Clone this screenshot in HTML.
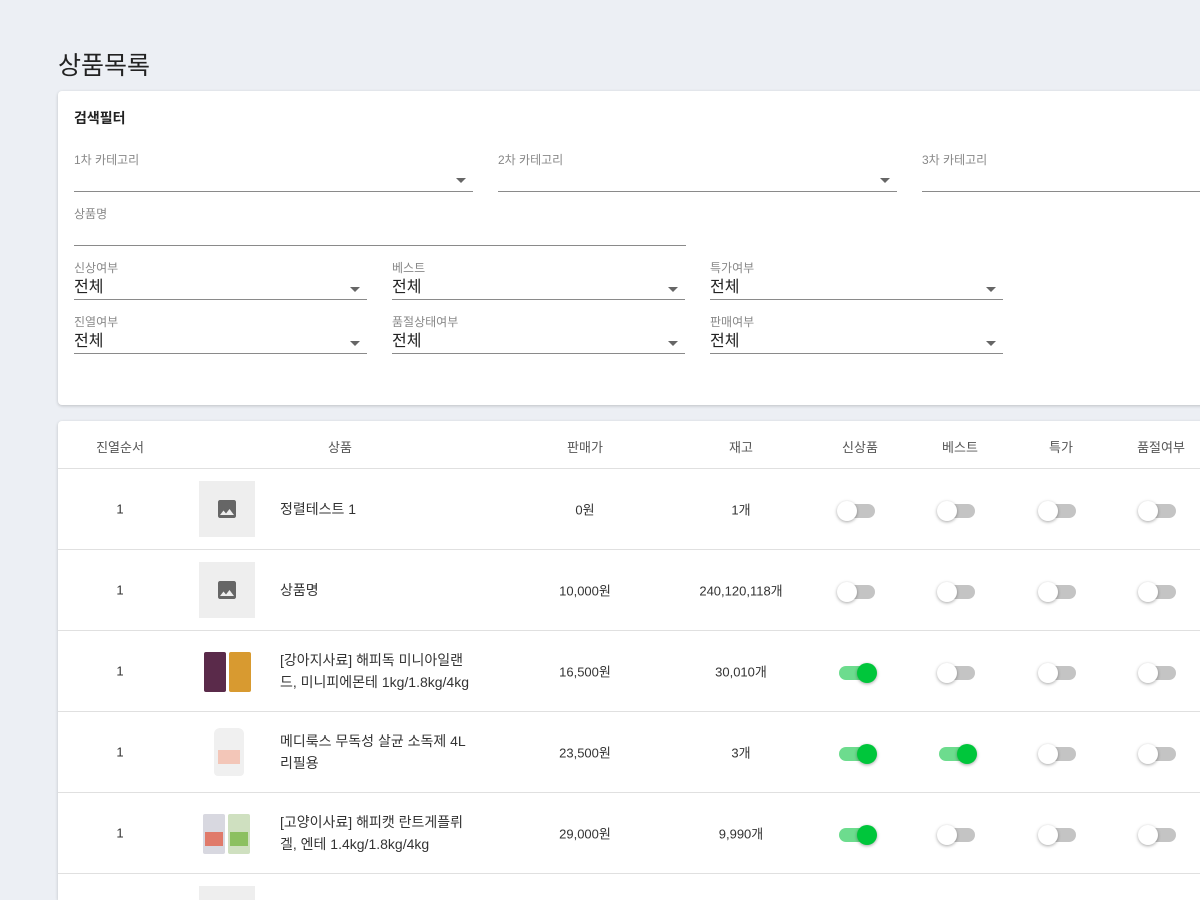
<!DOCTYPE html>
<html><head><meta charset="utf-8"><style>
*{margin:0;padding:0;box-sizing:border-box}
html{width:1200px;height:900px;overflow:hidden}
body{width:1200px;height:900px;overflow:hidden;background:#eceff4;font-family:"Liberation Sans","Noto Sans CJK KR",sans-serif;color:#333;position:relative}
.a{position:absolute}
.card{position:absolute;left:58px;width:1160px;background:#fff;border-radius:4px;box-shadow:0 1px 3px rgba(0,0,0,.2)}
.lbl{position:absolute;font-size:12px;color:#888}
.val{position:absolute;font-size:16px;color:#222}
.ul{position:absolute;height:1px;background:#8a8a8a}
.arr{position:absolute;width:0;height:0;border-left:5px solid transparent;border-right:5px solid transparent;border-top:5px solid #666}
.th{position:absolute;top:437px;font-size:13px;color:#555;transform:translateX(-50%);white-space:nowrap}
.hr{position:absolute;left:58px;width:1142px;height:1px;background:#e0e0e0}
.c{position:absolute;font-size:13px;color:#333;transform:translate(-50%,-50%);white-space:nowrap}
.nm{position:absolute;left:280px;font-size:14px;color:#333;line-height:22px;transform:translateY(-50%)}
.ph{position:absolute;left:199px;width:56px;height:56px;background:#eee}
.ph svg{position:absolute;left:16px;top:16px}
.sw{position:absolute;width:36px;height:14px;border-radius:7px;background:#c4c4c4}
.sw i{position:absolute;top:-3px;left:-2px;width:20px;height:20px;border-radius:50%;background:#fff;box-shadow:0 1px 3px rgba(0,0,0,.35)}
.sw.on{background:#6ddc8e}
.sw.on i{left:18px;background:#00c63b}
</style></head><body>
<div class="a" style="left:58px;top:46px;font-size:25px;color:#222">상품목록</div>
<div class="card" style="top:91px;height:314px"></div>
<div class="a" style="left:74px;top:108px;font-size:14px;font-weight:bold;color:#222">검색필터</div>

<div class="lbl" style="left:74px;top:151px">1차 카테고리</div><div class="ul" style="left:74px;top:191px;width:399px"></div><div class="arr" style="left:456px;top:178px"></div>
<div class="lbl" style="left:498px;top:151px">2차 카테고리</div><div class="ul" style="left:498px;top:191px;width:399px"></div><div class="arr" style="left:880px;top:178px"></div>
<div class="lbl" style="left:922px;top:151px">3차 카테고리</div><div class="ul" style="left:922px;top:191px;width:300px"></div>
<div class="lbl" style="left:74px;top:205px">상품명</div><div class="ul" style="left:74px;top:245px;width:612px"></div>

<div class="lbl" style="left:74px;top:259px">신상여부</div><div class="val" style="left:74px;top:273px">전체</div><div class="ul" style="left:74px;top:299px;width:293px"></div><div class="arr" style="left:350px;top:287px"></div>
<div class="lbl" style="left:392px;top:259px">베스트</div><div class="val" style="left:392px;top:273px">전체</div><div class="ul" style="left:392px;top:299px;width:293px"></div><div class="arr" style="left:668px;top:287px"></div>
<div class="lbl" style="left:710px;top:259px">특가여부</div><div class="val" style="left:710px;top:273px">전체</div><div class="ul" style="left:710px;top:299px;width:293px"></div><div class="arr" style="left:986px;top:287px"></div>
<div class="lbl" style="left:74px;top:313px">진열여부</div><div class="val" style="left:74px;top:327px">전체</div><div class="ul" style="left:74px;top:353px;width:293px"></div><div class="arr" style="left:350px;top:341px"></div>
<div class="lbl" style="left:392px;top:313px">품절상태여부</div><div class="val" style="left:392px;top:327px">전체</div><div class="ul" style="left:392px;top:353px;width:293px"></div><div class="arr" style="left:668px;top:341px"></div>
<div class="lbl" style="left:710px;top:313px">판매여부</div><div class="val" style="left:710px;top:327px">전체</div><div class="ul" style="left:710px;top:353px;width:293px"></div><div class="arr" style="left:986px;top:341px"></div>

<div class="card" style="top:421px;height:479px;border-radius:4px 4px 0 0"></div>
<div class="th" style="left:120px">진열순서</div>
<div class="th" style="left:340px">상품</div>
<div class="th" style="left:585px">판매가</div>
<div class="th" style="left:741px">재고</div>
<div class="th" style="left:860px">신상품</div>
<div class="th" style="left:960px">베스트</div>
<div class="th" style="left:1061px">특가</div>
<div class="th" style="left:1161px">품절여부</div>
<div class="hr" style="top:468px"></div>
<div class="hr" style="top:549px"></div>
<div class="hr" style="top:630px"></div>
<div class="hr" style="top:711px"></div>
<div class="hr" style="top:792px"></div>
<div class="hr" style="top:873px"></div>

<div class="c" style="left:120px;top:509px">1</div>
<div class="ph" style="top:481px"><svg width="24" height="24" viewBox="0 0 24 24"><path fill="#666" d="M21 19V5c0-1.1-.9-2-2-2H5c-1.1 0-2 .9-2 2v14c0 1.1.9 2 2 2h14c1.1 0 2-.9 2-2zM8.5 13.5l2.5 3 3.5-4.5 4.5 6H5l3.5-4.5z"/></svg></div>
<div class="nm" style="top:509px">정렬테스트 1</div>
<div class="c" style="left:585px;top:509px">0원</div>
<div class="c" style="left:741px;top:509px">1개</div>

<div class="c" style="left:120px;top:590px">1</div>
<div class="ph" style="top:562px"><svg width="24" height="24" viewBox="0 0 24 24"><path fill="#666" d="M21 19V5c0-1.1-.9-2-2-2H5c-1.1 0-2 .9-2 2v14c0 1.1.9 2 2 2h14c1.1 0 2-.9 2-2zM8.5 13.5l2.5 3 3.5-4.5 4.5 6H5l3.5-4.5z"/></svg></div>
<div class="nm" style="top:590px">상품명</div>
<div class="c" style="left:585px;top:590px">10,000원</div>
<div class="c" style="left:741px;top:590px">240,120,118개</div>

<div class="c" style="left:120px;top:671px">1</div>
<div class="a" style="left:204px;top:652px;width:22px;height:40px;background:#5a2a4a;border-radius:2px"></div>
<div class="a" style="left:229px;top:652px;width:22px;height:40px;background:#d89a30;border-radius:2px"></div>
<div class="nm" style="top:671px">[강아지사료] 해피독 미니아일랜<br>드, 미니피에몬테 1kg/1.8kg/4kg</div>
<div class="c" style="left:585px;top:671px">16,500원</div>
<div class="c" style="left:741px;top:671px">30,010개</div>

<div class="c" style="left:120px;top:752px">1</div>
<div class="a" style="left:214px;top:728px;width:30px;height:48px;background:#f0f0f0;border-radius:6px 6px 4px 4px"></div>
<div class="a" style="left:218px;top:750px;width:22px;height:14px;background:#f3c6b8"></div>
<div class="nm" style="top:752px">메디룩스 무독성 살균 소독제 4L<br>리필용</div>
<div class="c" style="left:585px;top:752px">23,500원</div>
<div class="c" style="left:741px;top:752px">3개</div>

<div class="c" style="left:120px;top:833px">1</div>
<div class="a" style="left:203px;top:814px;width:22px;height:40px;background:#d8d8e0;border-radius:2px"></div>
<div class="a" style="left:228px;top:814px;width:22px;height:40px;background:#cfe0c0;border-radius:2px"></div>
<div class="a" style="left:205px;top:832px;width:18px;height:14px;background:#e07a6a"></div>
<div class="a" style="left:230px;top:832px;width:18px;height:14px;background:#8cc060"></div>
<div class="nm" style="top:833px">[고양이사료] 해피캣 란트게플뤼<br>겔, 엔테 1.4kg/1.8kg/4kg</div>
<div class="c" style="left:585px;top:833px">29,000원</div>
<div class="c" style="left:741px;top:833px">9,990개</div>

<div class="ph" style="top:886px;height:14px"></div>

<div class="sw" style="left:839px;top:504px"><i></i></div><div class="sw" style="left:939px;top:504px"><i></i></div><div class="sw" style="left:1040px;top:504px"><i></i></div><div class="sw" style="left:1140px;top:504px"><i></i></div>
<div class="sw" style="left:839px;top:585px"><i></i></div><div class="sw" style="left:939px;top:585px"><i></i></div><div class="sw" style="left:1040px;top:585px"><i></i></div><div class="sw" style="left:1140px;top:585px"><i></i></div>
<div class="sw on" style="left:839px;top:666px"><i></i></div><div class="sw" style="left:939px;top:666px"><i></i></div><div class="sw" style="left:1040px;top:666px"><i></i></div><div class="sw" style="left:1140px;top:666px"><i></i></div>
<div class="sw on" style="left:839px;top:747px"><i></i></div><div class="sw on" style="left:939px;top:747px"><i></i></div><div class="sw" style="left:1040px;top:747px"><i></i></div><div class="sw" style="left:1140px;top:747px"><i></i></div>
<div class="sw on" style="left:839px;top:828px"><i></i></div><div class="sw" style="left:939px;top:828px"><i></i></div><div class="sw" style="left:1040px;top:828px"><i></i></div><div class="sw" style="left:1140px;top:828px"><i></i></div>
</body></html>
